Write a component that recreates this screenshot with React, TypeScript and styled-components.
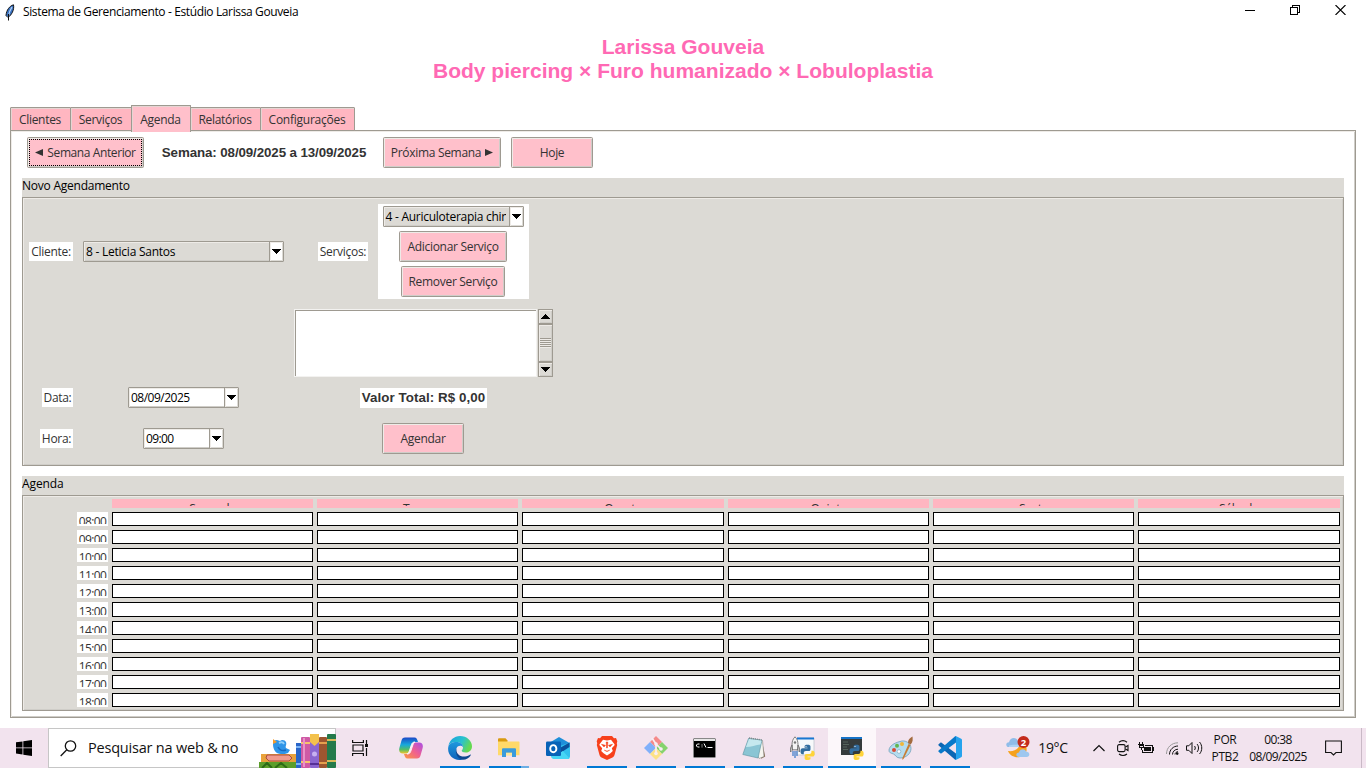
import React from "react";
import styled, { createGlobalStyle, css } from "styled-components";

const GlobalStyle = createGlobalStyle`
  * { box-sizing: border-box; }
  body { margin: 0; background: #fff; overflow: hidden; }
`;

const uiFont = `"Open Sans", "Noto Sans", sans-serif`;
const arial = `"Liberation Sans", Arial, sans-serif`;

const bevel = css`
  border: 1px solid #9e9a91;
  box-shadow: inset 1px 1px 0 #eeebe7, inset -1px -1px 0 #cfcdc8;
`;

const Desktop = styled.div`
  width: 1366px;
  height: 768px;
  display: flex;
  flex-direction: column;
  background: #fff;
  font: 12px/16px ${uiFont};
  color: #333;
`;

const Text = styled.span<{ $ls?: number; $size?: number }>`
  white-space: nowrap;
  letter-spacing: ${(p) => p.$ls ?? -0.3}px;
  ${(p) => p.$size && `font-size: ${p.$size}px;`}
`;

const TitleBar = styled.header`
  height: 24px;
  flex: none;
  display: flex;
  align-items: center;
  padding: 0 20px 0 5px;
  color: #000;
  svg { display: block; flex: none; }
`;
const TitleText = styled.div`
  flex: 1;
  padding-left: 8px;
`;
const WindowButtons = styled.div`
  display: flex;
  align-items: center;
  gap: 35px;
  height: 20px;
  margin-top: -4px;
`;

const Brand = styled.h1`
  margin: 11px 0 0;
  height: 70px;
  flex: none;
  text-align: center;
  font: bold 21.04px/24px ${arial};
  color: #ff69b4;
`;

const Tabs = styled.nav`
  display: flex;
  align-items: flex-end;
  height: 26px;
  padding-left: 10px;
  flex: none;
  position: relative;
  z-index: 1;
`;
const Tab = styled.div<{ $w: number; $active?: boolean }>`
  width: ${(p) => p.$w}px;
  height: ${(p) => (p.$active ? 27 : 24)}px;
  margin-bottom: ${(p) => (p.$active ? -1 : 0)}px;
  margin-right: -1px;
  padding-top: ${(p) => (p.$active ? 6 : 4)}px;
  padding-right: 1px;
  text-align: center;
  background: ${(p) => (p.$active ? "#ffc0cb" : "#ffb6c1")};
  border: 1px solid #9e9a91;
  border-bottom-width: ${(p) => (p.$active ? 0 : 1)}px;
  border-radius: 1px 1px 0 0;
  box-shadow: inset 1px 1px 0 #e6d5d3;
`;

const Page = styled.main`
  ${bevel}
  width: 1346px;
  height: 588px;
  margin-left: 10px;
  margin-top: -1px;
  padding: 6px 11px 0;
  flex: none;
  display: flex;
  flex-direction: column;
`;

const WeekBar = styled.div`
  display: flex;
  align-items: center;
  padding-left: 5px;
  height: 31px;
  flex: none;
`;
const WeekLabel = styled.div`
  width: 239px;
  padding-left: 1px;
  text-align: center;
  font: bold 13.33px/16px ${arial};
`;

const Button = styled.button<{ $w: number; $focus?: boolean }>`
  ${bevel}
  width: ${(p) => p.$w}px;
  height: 31px;
  flex: none;
  padding: 0;
  border-radius: 1.5px;
  background: #ffc0cb;
  font: 12px/16px ${uiFont};
  color: #333;
  outline: ${(p) => (p.$focus ? "1px dotted #000" : "none")};
  outline-offset: -3px;
  display: flex;
  align-items: center;
  justify-content: center;
  gap: 4px;
`;
const Spacer = styled.div<{ $w: number }>`
  width: ${(p) => p.$w}px;
`;

const GroupBox = styled.section<{ $h: number; $mt: number }>`
  width: 1322px;
  height: ${(p) => p.$h}px;
  margin-top: ${(p) => p.$mt}px;
  background: #dcdad5;
  display: flex;
  flex-direction: column;
  flex: none;
`;
const GroupTitle = styled.div`
  height: 19px;
  flex: none;
  color: #000;
`;
const GroupBody = styled.div`
  ${bevel}
  flex: 1;
  min-height: 0;
`;

const Form = styled.div`
  display: grid;
  grid-template-columns: 55px 211px 84px 185px;
  grid-template-rows: 105px 78px 31px 5px 41px;
  padding-top: 1px;
`;
const Slot = styled.div<{ $row: number; $col: string; $justify?: string }>`
  grid-row: ${(p) => p.$row};
  grid-column: ${(p) => p.$col};
  padding: 0 5px;
  display: flex;
  align-items: center;
  justify-content: ${(p) => p.$justify ?? "center"};
`;
const SubmitSlot = styled(Slot)`
  padding-right: 6px;
`;
const Label = styled.div<{ $w: number }>`
  width: ${(p) => p.$w}px;
  height: 19px;
  line-height: 19px;
  text-align: center;
  background: #fff;
`;
const TotalLabel = styled(Label)`
  height: 20px;
  font: bold 13.33px/20px ${arial};
`;
const Combo = styled.div<{ $w: number; $readonly?: boolean }>`
  ${bevel}
  width: ${(p) => p.$w}px;
  height: 21px;
  flex: none;
  border-radius: 1px;
  background: ${(p) => (p.$readonly ? "#dcdad5" : "#fff")};
  color: #000;
  display: flex;
`;
const ComboValue = styled.div`
  flex: 1;
  min-width: 0;
  overflow: hidden;
  margin-right: 3px;
  padding-left: 2px;
  line-height: 19px;
`;
const ComboArrow = styled.div`
  width: 14px;
  height: 19px;
  border-left: 1px solid #9e9a91;
  background: #fff;
  box-shadow: inset 1px 1px 0 #eeebe7, inset -1px -1px 0 #dcdad5;
  display: flex;
  align-items: center;
  justify-content: center;
`;
const ServiceStack = styled.div`
  width: 151px;
  height: 95px;
  background: #fff;
  display: flex;
  flex-direction: column;
  align-items: center;
  padding: 2px 1px 0 0;
  gap: 4px;
`;
const ListBox = styled.div`
  width: 243px;
  height: 68px;
  background: #fff;
  border: 1px solid #f3f2f0;
  box-shadow: inset 1px 1px 0 #9e9a91;
`;
const ScrollBar = styled.div`
  width: 15px;
  height: 68px;
  margin-left: 1px;
  display: flex;
  flex-direction: column;
`;
const ScrollPart = styled.div<{ $h: number }>`
  ${bevel}
  height: ${(p) => p.$h}px;
  background: #dcdad5;
  display: flex;
  align-items: center;
  justify-content: center;
`;
const Grip = styled.div`
  width: 11px;
  height: 10px;
  background: repeating-linear-gradient(#9e9a91 0 1px, #eeebe7 1px 2px);
`;

const Schedule = styled.div`
  display: grid;
  grid-template-columns: 31px 201px 201px 202px 201px 201px 202px;
  grid-template-rows: 9px repeat(5, 14px) 15px repeat(5, 14px);
  gap: 4px;
  padding: 3px 0 0 54px;
`;
const DayHead = styled.div`
  background: #ffb6c1;
  padding: 2px;
  text-align: center;
`;
const Clip = styled.div`
  height: 100%;
  overflow: hidden;
  & > span { display: block; }
`;
const Hour = styled.div`
  padding: 2px 1px;
  background: #fff;
  text-align: center;
`;
const Cell = styled.div`
  border: 1px solid #000;
  background: #fff;
`;

const Taskbar = styled.footer`
  margin-top: 10px;
  height: 40px;
  flex: none;
  display: flex;
  background: #f2e3ee;
  color: #111;
  svg { display: block; flex: none; }
`;
const Start = styled.div`
  width: 48px;
  display: flex;
  align-items: center;
  justify-content: center;
`;
const Search = styled.div`
  width: 288px;
  border: 1px solid #c6c6c6;
  background: #fff;
  display: flex;
  align-items: center;
  padding-left: 11px;
`;
const SearchText = styled.div`
  width: 182px;
  flex: none;
  padding-left: 11px;
`;
const BookShelf = styled.div`
  align-self: flex-end;
  margin: 0 -1px -1px 0;
`;
const TaskView = styled.div`
  width: 50px;
  padding-right: 2px;
  display: flex;
  align-items: center;
  justify-content: center;
`;
const TaskApp = styled.div<{ $run?: boolean; $active?: boolean; $multi?: boolean }>`
  width: 48px;
  margin-left: 1px;
  display: flex;
  align-items: center;
  justify-content: center;
  background-color: ${(p) => (p.$active ? "#fcf7fa" : "transparent")};
  background-image: ${(p) =>
    p.$multi
      ? "linear-gradient(90deg, #0078d4 80%, #6caee4 80%)"
      : p.$run
        ? "linear-gradient(#0078d4, #0078d4)"
        : "none"};
  background-size: ${(p) => (p.$active ? 48 : 40)}px 2px;
  background-position: center bottom;
  background-repeat: no-repeat;
`;
const TrayItem = styled.div<{ $w: number; $ml?: number }>`
  width: ${(p) => p.$w}px;
  margin-left: ${(p) => p.$ml ?? 0}px;
  flex: none;
  display: flex;
  align-items: center;
  justify-content: center;
`;
const TwoLines = styled.div<{ $w: number; $ml?: number }>`
  width: ${(p) => p.$w}px;
  margin-left: ${(p) => p.$ml ?? 0}px;
  padding-top: 3px;
  display: flex;
  flex-direction: column;
  align-items: center;
  line-height: 17px;
`;
const ShowDesktop = styled.div`
  width: 5px;
  margin-left: auto;
  border-left: 1px solid #c9b9c6;
`;

const Triangle = ({ up }: { up?: boolean }) => (
  <svg width="9" height="5" viewBox="0 0 9 5" shapeRendering="crispEdges">
    <path d={up ? "M4 0h1v1h1v1h1v1h1v1h1v1H0V4h1V3h1V2h1V1h1z" : "M0 0h9v1H8v1H7v1H6v1H5v1H4V4H3V3H2V2H1V1H0z"} />
  </svg>
);

const Select = ({ w, value, readonly, ls }: { w: number; value: string; readonly?: boolean; ls?: number }) => (
  <Combo $w={w} $readonly={readonly}>
    <ComboValue><Text $ls={ls}>{value}</Text></ComboValue>
    <ComboArrow><Triangle /></ComboArrow>
  </Combo>
);

const Feather = () => (
  <svg width="10" height="17" viewBox="0 0 10 17">
    <path d="M8.500 .8C4.500 2 1.500 6 1 11.500l2 2C6.500 11 9.500 6 8.500 .8z" fill="#3b74c4" stroke="#111" strokeWidth="1" />
    <path d="M7 3C5 6 4 9 3.200 13" stroke="#b9d4f5" strokeWidth="1.200" fill="none" />
    <path d="M3.500 10v6.500" stroke="#111" strokeWidth="1" />
  </svg>
);

const PythonMark = () => (
  <g>
    <path d="M14 8.500c0-1.700 1-2.500 4-2.500s4.200.8 4.200 2.500V12c0 1.700-1 2.600-2.700 2.600h-3.800c-1.700 0-2.800 1-2.800 2.700v1.700h-1.700C9.200 19 8.300 17.300 8.300 14.800s1-4 3-4h6.900V10H14z" fill="#336d9f" />
    <path d="M22.200 25.500c0-1.700.1.600 0-.9v-1.500h-4.100v-.8H25c2 0 3-1.600 3-4s-1-4.200-2.800-4.200h-1.700v1.700c0 1.700-1.100 2.800-2.800 2.800h-3.900c-1.600 0-2.700 1-2.700 2.600v3.400c0 1.700 1.300 2.500 4.100 2.500s4-.8 4-1.600z" fill="#ffd43b" />
    <circle cx="16" cy="8.300" r=".8" fill="#fff" />
  </g>
);

const hours = ["08:00", "09:00", "10:00", "11:00", "12:00", "13:00", "14:00", "15:00", "16:00", "17:00", "18:00"];
const days = ["Segunda", "Terça", "Quarta", "Quinta", "Sexta", "Sábado"];

const Books = () => (
  <svg width="77" height="34" viewBox="0 0 77 34">
    <path d="M0 28h37v6H0z" fill="#5c9e2b" /><path d="M3 34l5-5 5 5m3 0l6-5 6 5" stroke="#2d6b16" strokeWidth="2" fill="none" />
    <path d="M2 20h35v8H2z" fill="#e9a23b" /><path d="M8 21h22l3 3-3 3H10l-3-3z" fill="#f09a8c" stroke="#a94e3e" strokeWidth="1" />
    <path d="M14 10c0-2 1-4 4-4l3 1c2-2 5-1 6 1 1 3-1 4 0 6 1 1 3 1 4 2l-2 3c-2 1-4 1-7 1-5 0-8-4-8-10z" fill="#2f95e8" />
    <path d="M14 10V5l4 3z" fill="#f59b2a" /><path d="M19 13c2 4 5 4 8 3" stroke="#1769bf" strokeWidth="1.500" fill="none" /><path d="M20 9c2-1 4-1 5 1" stroke="#8fd0fb" strokeWidth="2" fill="none" />
    <rect x="37" y="9" width="5" height="25" fill="#2a66c8" /><path d="M37 13h5M37 30h5" stroke="#7cb4f5" strokeWidth="2" />
    <rect x="42" y="3" width="9" height="31" rx="1" fill="#cf5aa5" /><path d="M42 9h9M42 28h9" stroke="#f5c56b" strokeWidth="2" /><path d="M45 4v29" stroke="#ea91c8" strokeWidth="2" />
    <rect x="51" y="0" width="9" height="34" rx="1" fill="#8b66cf" /><path d="M51 0h9v8l-4.500 4L51 8z" fill="#f3c14b" /><circle cx="55.500" cy="20" r="2.500" fill="#c7b1f0" /><path d="M51 30h9" stroke="#553096" strokeWidth="2" />
    <rect x="60" y="3" width="8" height="31" rx="1" fill="#9d5630" /><path d="M60 9h8M60 29h8" stroke="#e6a04d" strokeWidth="2" />
    <rect x="68" y="0" width="9" height="34" rx="1" fill="#247a4b" /><path d="M68 6h9M68 27h9" stroke="#d8ba59" strokeWidth="2" />
  </svg>
);

const Copilot = () => (
  <svg width="24" height="22" viewBox="0 0 24 22">
    <defs>
      <linearGradient id="cpA" x1="0" y1="0" x2="0" y2="1"><stop offset="0" stopColor="#1b48c7" /><stop offset=".45" stopColor="#16a8dc" /><stop offset=".75" stopColor="#53bd68" /><stop offset="1" stopColor="#f1c629" /></linearGradient>
      <linearGradient id="cpB" x1="1" y1="0" x2="0" y2="1"><stop offset="0" stopColor="#a94ee8" /><stop offset=".5" stopColor="#f0618f" /><stop offset="1" stopColor="#fb9a3d" /></linearGradient>
    </defs>
    <path d="M6 .5h9.500c2 0 2.500 1.500 3 3L19 5h-3c-2 0-2.500 1-3 2.500L11 13c-.6 2-1.500 3.500-4 3.500H4C.5 16.500-.5 14 .5 10.500l2-7C3 1.500 4 .5 6 .5z" fill="url(#cpA)" />
    <path d="M18 21.500H8.500c-2 0-2.500-1.500-3-3L5 17h3c2 0 2.500-1 3-2.500L13 9c.6-2 1.500-3.500 4-3.500h3c3.500 0 4.500 2.500 3.500 6l-2 7c-.5 2-1.500 3-3.500 3z" fill="url(#cpB)" />
    <path d="M12.500 7.500c.6-1.500 1.500-2.500 3.500-2.500-1.500 1-2 2.500-2.500 4l-1.800 5.500c-.6 1.500-1.500 2.500-3.500 2.500 1.500-1 2-2.500 2.500-4z" fill="#fbf1f5" stroke="#fbf1f5" strokeWidth="1" />
  </svg>
);
const Edge = () => (
  <svg width="24" height="24" viewBox="0 0 24 24">
    <defs>
      <linearGradient id="edA" x1="0" y1="0" x2="1" y2=".4"><stop offset="0" stopColor="#1a9fdd" /><stop offset=".6" stopColor="#29c1cf" /><stop offset="1" stopColor="#65d950" /></linearGradient>
      <linearGradient id="edB" x1="0" y1="0" x2="0" y2="1"><stop offset="0" stopColor="#1e98dd" /><stop offset="1" stopColor="#1062ba" /></linearGradient>
    </defs>
    <path d="M.4 10C1.500 4.300 6.200 0 12 0c7 0 12 5 12 10.200 0 4-3 6.300-6.300 6.300-2.600 0-4-.9-4-1.700 0-.7 1.300-1.300 1.300-3.600C15 8.500 12 6 8.500 6 4.500 6 1.500 7.500.4 10z" fill="url(#edA)" />
    <path d="M.2 11.500C.7 7.500 4.500 6 8.500 6 12.500 6 15 8.600 15 11c-1.500-1.800-5-2-6.500 1.200C7 16 9.500 22 14.500 23.700 6 25.500-.8 19 .2 11.500z" fill="url(#edB)" />
    <path d="M8.500 12.200C7.500 17 11.500 21 17 20.500c2.500-.2 4-1.300 5-1.800.6-.3 1 .2.600.8C21 22 18 24 14.500 23.800 9.500 23 6.500 17 8.500 12.200z" fill="#0d478f" />
  </svg>
);
const Explorer = () => (
  <svg width="22" height="20" viewBox="0 0 22 20">
    <path d="M0 1.500C0 .7.500.2 1.300.2h6.200l2 2.300v2H0z" fill="#d99a10" /><path d="M0 3.500h20.500c.6 0 1 .4 1 1v12.800H0z" fill="#ffd969" />
    <path d="M4 19v-7.500c0-.8.500-1.300 1.200-1.300h11.600c.7 0 1.200.5 1.200 1.300V19h-4v-4.200H8V19z" fill="#3a9bdc" /><path d="M8 14.800h6v2.500H8z" fill="#fce69b" />
  </svg>
);
const Outlook = () => (
  <svg width="24" height="22" viewBox="0 0 24 22">
    <path d="M4 5.500L13 0l10.500 6v8H4z" fill="#1e8ed9" /><path d="M14 9l10-3.500V19c0 2-1 3-3 3H8l-3-3z" fill="#31c0ee" /><path d="M23.500 5.500V10L12 17.500V12z" fill="#0a4f9b" /><path d="M8 19l9-5 6.500 7.500c-.7.400-1.500.5-2.500.5H8c-1.500 0-3-1-3-3z" fill="#46d6f5" />
    <rect x="0" y="4.500" width="15" height="14.500" rx="1.200" fill="#0862b7" /><ellipse cx="7.300" cy="11.700" rx="3.100" ry="3.600" fill="none" stroke="#fff" strokeWidth="1.900" />
  </svg>
);
const Brave = () => (
  <svg width="22" height="24" viewBox="0 0 22 24">
    <path d="M6 0h10l2 2.300 2-.3 1.300 3.200-.5 2 .4 1.800-2.700 10c-.4 1.200-1 1.800-2 2.500L11 24l-5.500-2.500c-1-.7-1.600-1.300-2-2.500L.8 9l.4-1.800-.5-2L2 2l2 .3z" fill="#f7401b" />
    <path d="M7 3.800l4 .8 4-.8 3.500 4.500c.3.500 0 1-.4 1.500l-2.300 2.500 1 2.700-2.400 2.300-3.400 2.200-3.400-2.200-2.400-2.300 1-2.700-2.300-2.500c-.4-.5-.7-1-.4-1.500z" fill="#fff" />
    <path d="M5.500 8.300l4 1-1.500 1.700zm11 0l-4 1 1.500 1.700zM8.300 14.200l2.700 1.300 2.700-1.300-2.700 1z M10.200 6h1.600l-.4 6h-.8z" fill="#f7401b" stroke="#f7401b" strokeWidth=".5" />
  </svg>
);
const GitIcon = () => (
  <svg width="24" height="24" viewBox="0 0 24 24">
    <path d="M12 0l6 6-6 6-6-6z" fill="#f58a8a" /><path d="M6 6l6 6-6 6-6-6z" fill="#80b0fa" /><path d="M18 6l6 6-6 6-6-6z" fill="#86d36d" /><path d="M12 12l6 6-6 6-6-6z" fill="#fce286" />
    <path d="M8 2l4 6v10M12 8l5 5" fill="none" stroke="#f8eef4" strokeWidth="1.700" /><circle cx="12" cy="8" r="1.800" fill="#f8eef4" /><circle cx="17" cy="13" r="1.800" fill="#f8eef4" /><circle cx="12" cy="17.500" r="1.800" fill="#f8eef4" />
  </svg>
);
const Cmd = () => (
  <svg width="24" height="20" viewBox="0 0 24 20">
    <rect x=".5" y=".5" width="22" height="19" rx="1" fill="#000" stroke="#888" /><path d="M1 1h21v2H1z" fill="#e6e6e6" />
    <path d="M6.500 6H4.500L3.500 7v1l1 1h2M9 6.500v1m0 1v.8M11 5.500l2 4M14.500 9.500h5" stroke="#fff" fill="none" strokeWidth="1" />
  </svg>
);
const Notepad = () => (
  <svg width="24" height="23" viewBox="0 0 24 23">
    <path d="M20 4l3.200 15.500-4.200 2.300z" fill="#886e53" /><path d="M7 1l13.500 2.500 1.500 16-5 2z" fill="#f6f6f0" stroke="#8c8b88" strokeWidth=".6" />
    <path d="M6.500 1.500L20 3.200 16 21 .8 17.500z" fill="#8ac5d4" stroke="#5d929f" strokeWidth=".6" /><path d="M7 2l12.500 1.500-1 4C14 8 9 10 4 10z" fill="#c5e8ee" />
    <path d="M7 1l13 2" stroke="#7d8b8f" strokeWidth="1.400" strokeDasharray="1 1" />
  </svg>
);
const Launcher = () => (
  <svg width="26" height="24" viewBox="0 0 26 24">
    <path d="M7 2h17v17H7z" fill="#f7f9fb" stroke="#b7bfc8" strokeWidth=".7" /><path d="M7 1.500h17v2H7z" fill="#1877d2" />
    <path d="M5 .8c2.500 2.500 3 5 3 8v5H2V9c0-3 .5-5.700 3-8.200zM2 9l-1.500 3v4l2-2zM8 9l1.500 3v4l-2-2z" fill="#f4f4f4" stroke="#666" strokeWidth=".8" /><circle cx="5" cy="6.500" r="1.200" fill="#777" />
    <path d="M3 15v5M5 15v7M7 15v5" stroke="#3778c8" strokeWidth="1.200" /><g transform="translate(4.500 4.500) scale(.72)"><PythonMark /></g>
  </svg>
);
const PythonConsole = () => (
  <svg width="26" height="24" viewBox="0 0 26 24">
    <path d="M2 1h21v18H2z" fill="#353b3c" /><path d="M2 1h21v2H2z" fill="#1673c7" /><path d="M4 6h5M4 8.500h6M4 11h4M4 13.500h5" stroke="#56645c" strokeWidth="1" />
    <g transform="translate(4.500 4.500) scale(.72)"><PythonMark /></g>
  </svg>
);
const Paint = () => (
  <svg width="26" height="24" viewBox="0 0 26 24">
    <path d="M12 5.500C17 3.500 23 7 23 12.500c0 5-5 9.500-11 9.500-4 0-4-3-6.500-4S.8 17 1 14C1.500 10 6 7 12 5.500z" fill="#b5dcef" stroke="#6f9eb8" strokeWidth=".8" />
    <circle cx="6" cy="14" r="2" fill="#d94b35" /><circle cx="9" cy="9.800" r="2" fill="#63b54e" /><circle cx="14" cy="8" r="2" fill="#f0b63a" /><circle cx="11" cy="15.500" r="1.800" fill="#fff" stroke="#7c9fb6" strokeWidth=".6" />
    <path d="M20.500 8l2 1-7 14-1.300.8.300-2z" fill="#c87d35" /><path d="M20 7c0-3 1-4.500 4.500-6.500.3 3 .5 5.500-1.800 8z" fill="#a46b3e" />
  </svg>
);
const VSCode = () => (
  <svg width="24" height="24" viewBox="0 0 24 24">
    <path d="M.6 8.200L2.300 6.700c.4-.3.900-.3 1.300 0L18 17.500V24c-.6-.1-1-.3-1.400-.7L.6 9.500c-.4-.4-.4-1 0-1.300z" fill="#0b67b4" />
    <path d="M.6 15.800l1.700 1.500c.4.300.9.300 1.300 0L18 6.500V0c-.6.100-1 .3-1.400.7L.6 14.500c-.4.400-.4 1 0 1.300z" fill="#0879c9" />
    <path d="M16.600 23.300c.5.500 1 .7 1.700.4L23.200 21.300c.5-.3.800-.7.800-1.300V4c0-.6-.3-1-.8-1.300L18.300.3c-.7-.3-1.200-.1-1.700.4.800-.3 1.400 0 1.400 1v20.600c0 1-.6 1.300-1.400 1z" fill="#26a3ed" />
  </svg>
);
const Weather = () => (
  <svg width="26" height="24" viewBox="0 0 26 24">
    <path d="M15 5c1 6-4 11-12 10 2 5 7 7 12 6 5-1 8-6 6-11-1-3-3-4.500-6-5z" fill="#f6a21d" />
    <path d="M4 11C.5 11 .2 6.500 4 6.200 5 1 11.500.5 13 5c4 0 4.200 6 0 6z" fill="#8fbce9" /><path d="M4 9.500c4-1 7-.5 12-1.500-.5 2-1 3-3 3H4z" fill="#acd1f5" />
    <path d="M14 21c-3.500 0-3.500-4.500 0-4.600 1-4 6.300-4 7.300-.6 4 0 4 5.200.2 5.200z" fill="#9ec7ef" />
    <circle cx="18.500" cy="6" r="6" fill="#c42b1c" />
    <text x="18.500" y="9.500" textAnchor="middle" fontSize="9.500" fontWeight="bold" fill="#fff" fontFamily="Open Sans">2</text>
  </svg>
);

export default function App() {
  return (
    <Desktop>
      <GlobalStyle />
      <TitleBar>
        <Feather />
        <TitleText><Text $ls={-0.37}>Sistema de Gerenciamento - Estúdio Larissa Gouveia</Text></TitleText>
        <WindowButtons>
          <svg width="10" height="10" shapeRendering="crispEdges"><path d="M0 5h10v1H0z" /></svg>
          <svg width="10" height="10" fill="none" stroke="#000" shapeRendering="crispEdges"><path d="M.5 2.500h7v7h-7zM2.500 2V.5h7v7H8" /></svg>
          <svg width="11" height="10" stroke="#000" strokeWidth="1.100"><path d="M.5 0l10 10M10.500 0l-10 10" /></svg>
        </WindowButtons>
      </TitleBar>
      <Brand>Larissa Gouveia<br />Body piercing × Furo humanizado × Lobuloplastia</Brand>
      <Tabs>
        <Tab $w={61}><Text>Clientes</Text></Tab>
        <Tab $w={62}><Text>Serviços</Text></Tab>
        <Tab $w={60} $active><Text>Agenda</Text></Tab>
        <Tab $w={71}><Text>Relatórios</Text></Tab>
        <Tab $w={95}><Text $ls={-0.25}>Configurações</Text></Tab>
      </Tabs>
      <Page>
        <WeekBar>
          <Button $w={117} $focus>
            <svg width="8" height="7"><path d="M8 0v7L0 3.500z" fill="#333" /></svg>
            <Text $ls={-0.4}>Semana Anterior</Text>
          </Button>
          <WeekLabel><Text $ls={-0.1}>Semana: 08/09/2025 a 13/09/2025</Text></WeekLabel>
          <Button $w={118}>
            <Text>Próxima Semana</Text>
            <svg width="8" height="7"><path d="M0 0v7l8-3.500z" fill="#333" /></svg>
          </Button>
          <Spacer $w={10} />
          <Button $w={82}><Text>Hoje</Text></Button>
        </WeekBar>

        <GroupBox $h={288} $mt={10}>
          <GroupTitle><Text $ls={-0.24}>Novo Agendamento</Text></GroupTitle>
          <GroupBody>
            <Form>
              <Slot $row={1} $col="1" $justify="flex-end"><Label $w={44}><Text>Cliente:</Text></Label></Slot>
              <Slot $row={1} $col="2"><Select w={201} value="8 - Leticia Santos" readonly ls={-0.24} /></Slot>
              <Slot $row={1} $col="3" $justify="flex-end"><Label $w={50}><Text>Serviços:</Text></Label></Slot>
              <Slot $row={1} $col="4" $justify="flex-start">
                <ServiceStack>
                  <Select w={141} value="4 - Auriculoterapia chinesa" readonly ls={-0.27} />
                  <Button $w={108}><Text>Adicionar Serviço</Text></Button>
                  <Button $w={104}><Text>Remover Serviço</Text></Button>
                </ServiceStack>
              </Slot>
              <Slot $row={2} $col="3 / span 2">
                <ListBox />
                <ScrollBar>
                  <ScrollPart $h={15}><Triangle up /></ScrollPart>
                  <ScrollPart $h={38}><Grip /></ScrollPart>
                  <ScrollPart $h={15}><Triangle /></ScrollPart>
                </ScrollBar>
              </Slot>
              <Slot $row={3} $col="1" $justify="flex-end"><Label $w={31}><Text>Data:</Text></Label></Slot>
              <Slot $row={3} $col="2"><Select w={111} value="08/09/2025" ls={-0.5} /></Slot>
              <Slot $row={3} $col="3 / span 2"><TotalLabel $w={127}><Text $ls={0.08}>Valor Total: R$ 0,00</Text></TotalLabel></Slot>
              <Slot $row={5} $col="1" $justify="flex-end"><Label $w={33}><Text>Hora:</Text></Label></Slot>
              <Slot $row={5} $col="2"><Select w={81} value="09:00" ls={-0.6} /></Slot>
              <SubmitSlot $row={5} $col="3 / span 2"><Button $w={82}><Text>Agendar</Text></Button></SubmitSlot>
            </Form>
          </GroupBody>
        </GroupBox>

        <GroupBox $h={235} $mt={10}>
          <GroupTitle><Text $ls={-0.1}>Agenda</Text></GroupTitle>
          <GroupBody>
            <Schedule>
              <div />
              {days.map((d) => (
                <DayHead key={d}><Clip><Text>{d}</Text></Clip></DayHead>
              ))}
              {hours.map((h) => (
                <React.Fragment key={h}>
                  <Hour><Clip><Text $ls={-0.6}>{h}</Text></Clip></Hour>
                  {days.map((d) => <Cell key={d} />)}
                </React.Fragment>
              ))}
            </Schedule>
          </GroupBody>
        </GroupBox>
      </Page>

      <Taskbar>
        <Start>
          <svg width="16" height="16" viewBox="0 0 16 16"><path d="M0 2.300L6.500 1.400v6.100H0zM7.300 1.300L16 0v7.500H7.300zM0 8.300h6.500v6.200L0 13.600zM7.300 8.300H16V16l-8.700-1.300z" /></svg>
        </Start>
        <Search>
          <svg width="17" height="17" viewBox="0 0 17 17" fill="none" stroke="#111" strokeWidth="1.300"><circle cx="10.500" cy="6" r="5.200" /><path d="M6.800 9.800L.7 16" /></svg>
          <SearchText><Text $size={14.5} $ls={-0.2}>Pesquisar na web &amp; no</Text></SearchText>
          <BookShelf><Books /></BookShelf>
        </Search>
        <TaskView>
          <svg width="17" height="16" fill="none" stroke="#111" strokeWidth="1.200"><path d="M.6 0v2.500h10.800V0M1 5h10v6H1zM.6 16v-2.500h10.800V16M14.500 0v4M14.500 8v8" /><path d="M13 4h3v3h-3z" fill="#111" stroke="none" /></svg>
        </TaskView>
        <TaskApp><Copilot /></TaskApp>
        <TaskApp $run><Edge /></TaskApp>
        <TaskApp $run $multi><Explorer /></TaskApp>
        <TaskApp><Outlook /></TaskApp>
        <TaskApp $run><Brave /></TaskApp>
        <TaskApp $run><GitIcon /></TaskApp>
        <TaskApp $run><Cmd /></TaskApp>
        <TaskApp $run><Notepad /></TaskApp>
        <TaskApp $run><Launcher /></TaskApp>
        <TaskApp $run $active><PythonConsole /></TaskApp>
        <TaskApp $run><Paint /></TaskApp>
        <TaskApp $run><VSCode /></TaskApp>
        <TrayItem $w={26} $ml={31}><Weather /></TrayItem>
        <TrayItem $w={30} $ml={7}><Text $size={14}>19°C</Text></TrayItem>
        <TrayItem $w={14} $ml={24}>
          <svg width="12" height="8" fill="none" stroke="#111" strokeWidth="1.200"><path d="M.5 7L6 1.500 11.500 7" /></svg>
        </TrayItem>
        <TrayItem $w={14} $ml={10}>
          <svg width="12" height="16" fill="none" stroke="#111" strokeWidth="1.100"><rect x=".6" y="4.600" width="7.500" height="7" rx="1.500" /><path d="M8.500 7l2.500-1.500v5L8.500 9M2 2.200C4.500.3 7.500.3 10 2.200M2 14c2.500 1.800 5.500 1.800 8 0" /></svg>
        </TrayItem>
        <TrayItem $w={18} $ml={7}>
          <svg width="17" height="13" fill="none" stroke="#111" shapeRendering="crispEdges">
            <path d="M7 3.500h7.500v7h-10v-3M14.500 5.500h1v3h-1" />
            <path d="M6 5h7v4H6z" fill="#111" stroke="none" />
            <path d="M1.500 0v2M4.500 0v2M0 2.500h6M1 3h4v2H1zM3 5v3" />
          </svg>
        </TrayItem>
        <TrayItem $w={14} $ml={10}>
          <svg width="13" height="13" fill="none" stroke="#111"><path d="M.5 12C.5 5.500 5.500.8 12 .8" stroke="#999" /><path d="M3.500 12.500c0-5 4-8.500 8.500-8.500M6.500 12.500c0-3 2.500-5.300 5.500-5.300M9 12.500c0-1.500 1.400-2.800 3-2.800" /><circle cx="11.200" cy="11.600" r="1.300" fill="#111" stroke="none" /></svg>
        </TrayItem>
        <TrayItem $w={18} $ml={6}>
          <svg width="17" height="14" fill="none" stroke="#111"><path d="M.5 4.800h2.300L6 1.500v11L2.800 9.300H.5zM8.500 5c1 1.200 1 2.800 0 4M11 3c2 2.200 2 5.800 0 8M13.500 1c3 3.300 3 8.700 0 12" /></svg>
        </TrayItem>
        <TwoLines $w={30} $ml={7}><Text $ls={-0.4}>POR</Text><Text $ls={-0.4}>PTB2</Text></TwoLines>
        <TwoLines $w={60} $ml={8}><Text $ls={-0.6}>00:38</Text><Text $ls={-0.6}>08/09/2025</Text></TwoLines>
        <TrayItem $w={18} $ml={16}>
          <svg width="17" height="17" fill="none" stroke="#111" strokeWidth="1.100"><path d="M.6 1h15.800v11.500H11L8.500 15 6 12.500H.6z" /></svg>
        </TrayItem>
        <ShowDesktop />
      </Taskbar>
    </Desktop>
  );
}
